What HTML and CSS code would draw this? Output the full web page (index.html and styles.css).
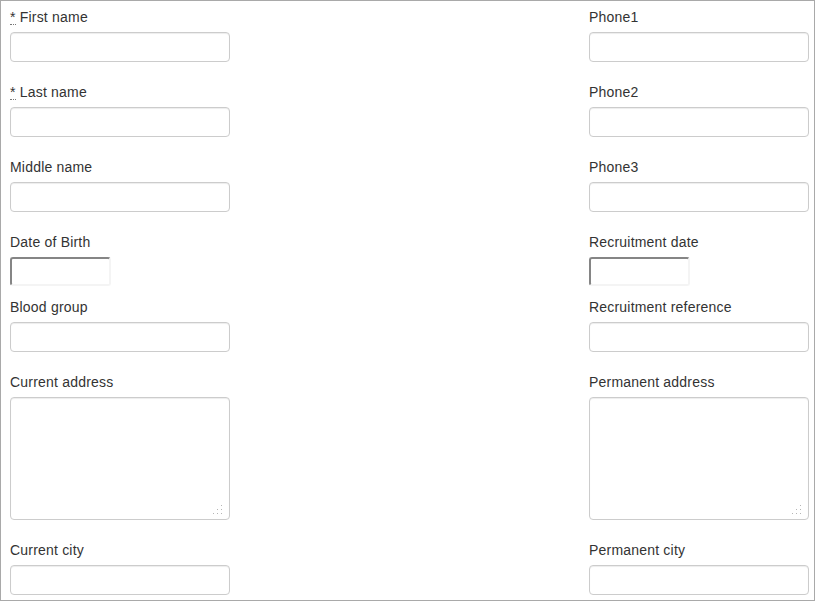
FILE: index.html
```html
<!DOCTYPE html>
<html>
<head>
<meta charset="utf-8">
<title>Employee form</title>
<link rel="stylesheet" href="styles.css">
</head>
<body>
<form class="page">
  <div class="col">
    <div class="group">
      <label class="lbl"><abbr title="required">*</abbr> First name</label>
      <input class="field" type="text">
    </div>
    <div class="group">
      <label class="lbl"><abbr title="required">*</abbr> Last name</label>
      <input class="field" type="text">
    </div>
    <div class="group">
      <label class="lbl">Middle name</label>
      <input class="field" type="text">
    </div>
    <div class="group group-date">
      <label class="lbl">Date of Birth</label>
      <input class="date-field" type="text">
    </div>
    <div class="group">
      <label class="lbl">Blood group</label>
      <input class="field" type="text">
    </div>
    <div class="group">
      <label class="lbl">Current address</label>
      <textarea class="field area"></textarea>
    </div>
    <div class="group">
      <label class="lbl">Current city</label>
      <input class="field" type="text">
    </div>
  </div>
  <div class="col">
    <div class="group">
      <label class="lbl">Phone1</label>
      <input class="field" type="text">
    </div>
    <div class="group">
      <label class="lbl">Phone2</label>
      <input class="field" type="text">
    </div>
    <div class="group">
      <label class="lbl">Phone3</label>
      <input class="field" type="text">
    </div>
    <div class="group group-date">
      <label class="lbl">Recruitment date</label>
      <input class="date-field" type="text">
    </div>
    <div class="group">
      <label class="lbl">Recruitment reference</label>
      <input class="field" type="text">
    </div>
    <div class="group">
      <label class="lbl">Permanent address</label>
      <textarea class="field area"></textarea>
    </div>
    <div class="group">
      <label class="lbl">Permanent city</label>
      <input class="field" type="text">
    </div>
  </div>
</form>
</body>
</html>
```

FILE: styles.css
```css
html, body {
  margin: 0;
  padding: 0;
  background: #fff;
}

body {
  font-family: "Liberation Sans", Arial, sans-serif;
  font-size: 14px;
  line-height: 20px;
  color: #333;
}

.page {
  box-sizing: border-box;
  width: 815px;
  height: 601px;
  margin: 0;
  border: 1px solid #a9a9a9;
  padding: 6px 5px 0 9px;
  display: flex;
  justify-content: space-between;
  overflow: hidden;
}

.col {
  width: 220px;
  display: flex;
  flex-direction: column;
}

.group {
  display: flex;
  flex-direction: column;
  align-items: flex-start;
  margin-bottom: 20px;
}

.group-date {
  margin-bottom: 11px;
}

.lbl {
  display: block;
  margin-bottom: 5px;
  font-weight: normal;
  line-height: 20px;
  letter-spacing: 0.2px;
}

.lbl abbr {
  text-decoration: none;
  border-bottom: 1px dotted #777;
  cursor: help;
  line-height: 14px;
  display: inline-block;
}

.field {
  box-sizing: border-box;
  display: block;
  width: 220px;
  height: 30px;
  margin: 0;
  padding: 5px 10px;
  border: 1px solid #ccc;
  border-radius: 4px;
  background: #fff;
  box-shadow: inset 0 1px 1px rgba(0, 0, 0, 0.075);
  font: inherit;
  color: #555;
  outline: none;
}

.area {
  height: 123px;
  resize: none;
  background-color: #fff;
  background-image:
    linear-gradient(#b5b5b5, #b5b5b5),
    linear-gradient(#b5b5b5, #b5b5b5),
    linear-gradient(#b5b5b5, #b5b5b5),
    linear-gradient(#b5b5b5, #b5b5b5),
    linear-gradient(#b5b5b5, #b5b5b5),
    linear-gradient(#b5b5b5, #b5b5b5);
  background-size: 1px 1px;
  background-repeat: no-repeat;
  background-position:
    210px 107px,
    206px 111px,
    210px 111px,
    202px 115px,
    206px 115px,
    210px 115px;
}

.date-field {
  box-sizing: border-box;
  display: block;
  width: 101px;
  height: 29px;
  margin: 0;
  padding: 2px 4px;
  border-style: solid;
  border-width: 2px;
  border-color: #858585 #f4f4f4 #f4f4f4 #858585;
  border-radius: 3px;
  background: #fff;
  font: inherit;
  outline: none;
}
```
